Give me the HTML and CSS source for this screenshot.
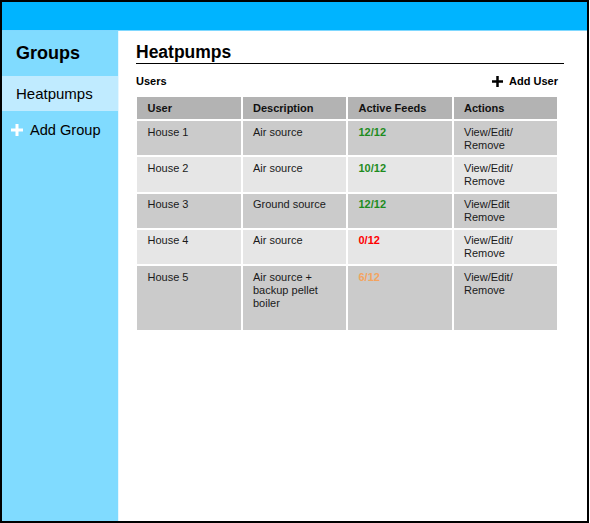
FILE: index.html
```html
<!DOCTYPE html>
<html>
<head>
<meta charset="utf-8">
<link rel="stylesheet" href="styles.css">
</head>
<body>
<div class="frame">
  <div class="topbar"></div>
  <div class="body">
    <aside class="sidebar">
      <div class="side-title">Groups</div>
      <div class="side-item active">Heatpumps</div>
      <div class="side-item add">
        <svg class="plus" width="12" height="12" viewBox="0 0 12 12"><rect x="4.5" y="0" width="3" height="12" fill="#fff"/><rect x="0" y="4.5" width="12" height="3" fill="#fff"/></svg>
        <span>Add Group</span>
      </div>
    </aside>
    <main class="main">
      <h1 class="title">Heatpumps</h1>
      <div class="toolbar">
        <span class="label">Users</span>
        <span class="add-user">
          <svg width="11" height="11" viewBox="0 0 11 11"><rect x="4.25" y="0" width="2.5" height="11" fill="#000"/><rect x="0" y="4.25" width="11" height="2.5" fill="#000"/></svg>
          Add User
        </span>
      </div>
      <div class="table">
        <div class="cell head">User</div>
        <div class="cell head">Description</div>
        <div class="cell head">Active Feeds</div>
        <div class="cell head">Actions</div>

        <div class="cell odd">House 1</div>
        <div class="cell odd">Air source</div>
        <div class="cell odd feed ok">12/12</div>
        <div class="cell odd">View/Edit/<br>Remove</div>

        <div class="cell even">House 2</div>
        <div class="cell even">Air source</div>
        <div class="cell even feed ok">10/12</div>
        <div class="cell even">View/Edit/<br>Remove</div>

        <div class="cell odd">House 3</div>
        <div class="cell odd">Ground source</div>
        <div class="cell odd feed ok">12/12</div>
        <div class="cell odd">View/Edit<br>Remove</div>

        <div class="cell even">House 4</div>
        <div class="cell even">Air source</div>
        <div class="cell even feed bad">0/12</div>
        <div class="cell even">View/Edit/<br>Remove</div>

        <div class="cell odd tall">House 5</div>
        <div class="cell odd tall">Air source +<br>backup pellet<br>boiler</div>
        <div class="cell odd tall feed warn">6/12</div>
        <div class="cell odd tall">View/Edit/<br>Remove</div>
      </div>
    </main>
  </div>
</div>
</body>
</html>
```
FILE: styles.css
```css
html, body {
  margin: 0;
  padding: 0;
  background: #fff;
}
body {
  font-family: "Liberation Sans", Arial, sans-serif;
  color: #111;
}
.frame {
  width: 589px;
  height: 523px;
  box-sizing: border-box;
  border: 2px solid #000;
  display: flex;
  flex-direction: column;
}
.topbar {
  height: 28px;
  flex: none;
  background: #00b4ff;
  border-bottom: 1px solid #7fd8ff;
}
.body {
  flex: 1;
  display: flex;
  min-height: 0;
}
.sidebar {
  width: 116px;
  flex: none;
  background: #80dbff;
  border-right: 1px solid #e6f7ff;
}
.side-title {
  height: 45px;
  display: flex;
  align-items: center;
  padding-left: 14px;
  font-size: 18px;
  font-weight: bold;
  color: #000;
}
.side-item {
  height: 35px;
  display: flex;
  align-items: center;
  padding-left: 14px;
  font-size: 15px;
  color: #000;
}
.side-item.active {
  background: #c0ebff;
}
.side-item.add {
  padding-left: 9px;
  gap: 7px;
  height: 38px;
  font-size: 14.6px;
}
.plus {
  display: block;
  flex: none;
}
.main {
  flex: 1;
  padding: 0 23px 0 17px;
}
.title {
  margin: 10px 0 0;
  font-size: 17.5px;
  line-height: 22px;
  font-weight: bold;
  color: #000;
  border-bottom: 1px solid #000;
}
.toolbar {
  margin-top: 11px;
  height: 13px;
  line-height: 13px;
  display: flex;
  justify-content: space-between;
  align-items: center;
  padding-right: 6px;
  font-size: 11px;
  font-weight: bold;
  color: #000;
}
.add-user {
  display: flex;
  align-items: center;
  gap: 6px;
}
.add-user svg {
  display: block;
}
.table {
  margin: 9px 0 0 1px;
  width: 420px;
  display: grid;
  grid-template-columns: repeat(4, 1fr);
  gap: 2px;
  font-size: 11px;
  line-height: 13px;
}
.cell {
  box-sizing: border-box;
  height: 34.25px;
  padding: 4.5px 0 0 10.5px;
  color: #1a1a1a;
}
.cell.head {
  height: 22px;
  padding-top: 5px;
  background: #b3b3b3;
  font-weight: bold;
  color: #111;
}
.cell.odd {
  background: #cbcbcb;
}
.cell.even {
  background: #e6e6e6;
}
.cell.tall {
  height: 64px;
}
.feed {
  font-weight: bold;
}
.feed.ok {
  color: #1e8c1e;
}
.feed.bad {
  color: #ff0000;
}
.feed.warn {
  color: #f4a460;
}
```
